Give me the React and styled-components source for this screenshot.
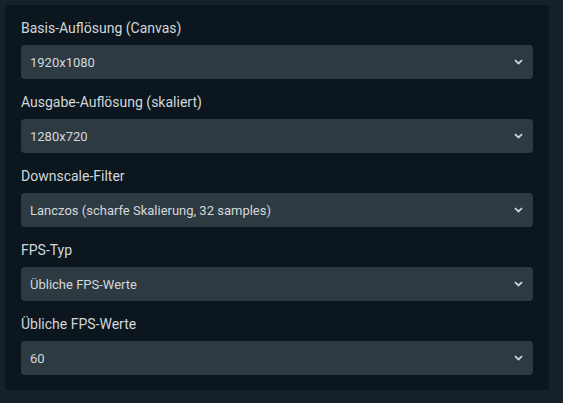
import React from "react";
import styled, { createGlobalStyle } from "styled-components";

const Global = createGlobalStyle`
  html, body { margin: 0; padding: 0; background: #17212a; }
  body { font-family: Roboto, "Noto Sans", sans-serif; }
`;

const Page = styled.div`
  padding: 5px;
  min-height: 403px;
  box-sizing: border-box;
`;

const Panel = styled.div`
  width: 544px;
  box-sizing: border-box;
  background: #0b161e;
  border-radius: 3px;
  padding: 14px 16px 15px;
  display: flex;
  flex-direction: column;
  gap: 14px;
`;

const Field = styled.div`
  display: flex;
  flex-direction: column;
  gap: 8px;
`;

const Label = styled.div`
  font-size: 14px;
  line-height: 18px;
  color: #d2d6da;
`;

const Select = styled.div`
  height: 34px;
  box-sizing: border-box;
  background: #2d3a42;
  border-radius: 4px;
  display: flex;
  align-items: center;
  justify-content: space-between;
  padding: 0 10px 0 9px;
  font-size: 13px;
  color: #d4d8dc;
`;

const Chevron = () => (
  <svg width="9" height="6" viewBox="0 0 9 6" fill="none">
    <path d="M1 1.2L4.5 4.5L8 1.2" stroke="#cfd3d7" strokeWidth="1.8" />
  </svg>
);

const fields = [
  ["Basis-Auflösung (Canvas)", "1920x1080"],
  ["Ausgabe-Auflösung (skaliert)", "1280x720"],
  ["Downscale-Filter", "Lanczos (scharfe Skalierung, 32 samples)"],
  ["FPS-Typ", "Übliche FPS-Werte"],
  ["Übliche FPS-Werte", "60"],
];

export default function App() {
  return (
    <>
      <Global />
      <Page>
        <Panel>
          {fields.map(([l, v]) => (
            <Field key={l}>
              <Label>{l}</Label>
              <Select>
                <span>{v}</span>
                <Chevron />
              </Select>
            </Field>
          ))}
        </Panel>
      </Page>
    </>
  );
}
